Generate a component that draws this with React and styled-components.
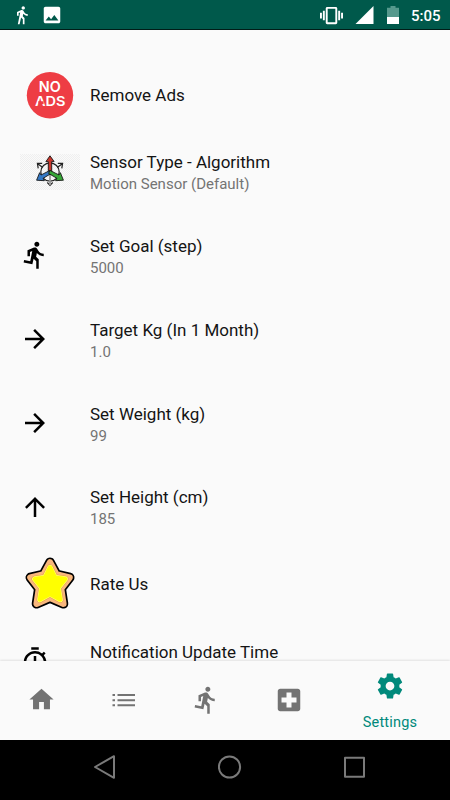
import React from "react";
import styled, { createGlobalStyle } from "styled-components";
import {
  MdDirectionsWalk,
  MdDirectionsRun,
  MdImage,
  MdVibration,
  MdArrowForward,
  MdArrowUpward,
  MdOutlineTimer,
  MdHome,
  MdLocalHospital,
} from "react-icons/md";

const GlobalStyle = createGlobalStyle`
  * { box-sizing: border-box; }
  body { margin: 0; background: #fafafa; }
`;

const Screen = styled.div`
  display: flex;
  flex-direction: column;
  width: 450px;
  height: 800px;
  overflow: hidden;
  background: #fafafa;
  font-family: Roboto, "Liberation Sans", sans-serif;
`;

const StatusBar = styled.header`
  display: flex;
  flex: none;
  align-items: center;
  justify-content: space-between;
  height: 30px;
  padding: 0 9px 0 12px;
  background: #00594b;
  border-bottom: 1px solid #001d18;
  color: #fff;
`;

const StatusGroup = styled.div`
  display: flex;
  align-items: center;
  gap: ${(p) => p.$gap}px;
  height: 29px;
  padding-top: 1px;
  svg { display: block; flex: none; }
`;

const Clock = styled.time`
  width: 30px;
  font-size: 15px;
  font-weight: 500;
  line-height: 28px;
  padding-top: 1px;
  white-space: nowrap;
`;

const SettingsList = styled.main`
  display: flex;
  flex: 1;
  flex-direction: column;
  min-height: 0;
  overflow: hidden;
  padding-top: 30px;
`;

const SettingRow = styled.div`
  display: flex;
  flex: none;
  align-items: center;
  height: ${(p) => (p.$tall ? 83.75 : 70.3)}px;
  padding-left: 20px;
`;

const IconSlot = styled.div`
  display: flex;
  align-items: center;
  width: 70px;
  padding-bottom: 1px;
  color: #000;
  svg { display: block; flex: none; }
`;

const RowText = styled.div`
  display: flex;
  flex-direction: column;
  min-height: ${(p) => (p.$tall ? 44.6 : 24)}px;
  padding-top: 1.6px;
`;

const RowTitle = styled.div`
  color: #141414;
  font-size: 17px;
  line-height: 23px;
  white-space: nowrap;
`;

const RowSummary = styled.div`
  color: #747474;
  font-size: 15px;
  line-height: 20px;
  white-space: nowrap;
`;

const TabBar = styled.nav`
  display: flex;
  flex: none;
  z-index: 1;
  height: 79px;
  background: #fafafa;
  box-shadow: 0 -1px 2px rgba(0, 0, 0, 0.1);
`;

const Tab = styled.div`
  display: flex;
  flex-direction: column;
  align-items: center;
  width: ${(p) => (p.$active ? 120 : 82.5)}px;
  padding-top: ${(p) => (p.$active ? 10 : 24)}px;
  color: ${(p) => (p.$active ? "#00897b" : "#737373")};
  svg { display: block; flex: none; }
`;

const TabLabel = styled.span`
  margin-top: 12px;
  font-size: 14.5px;
  line-height: 20px;
  letter-spacing: 0.2px;
`;

const SystemNav = styled.footer`
  display: flex;
  flex: none;
  align-items: center;
  justify-content: space-between;
  height: 60px;
  padding: 0 84px 6px 93px;
  background: #000;
`;

const BadgeText = styled.text`
  fill: #fff;
  font-family: Inter, Roboto, sans-serif;
  font-size: ${(p) => p.$size}px;
  font-weight: 600;
`;

const SignalIcon = () => (
  <svg width="20" height="18" viewBox="0 0 20 18">
    <path d="M18.5 0V18H0.5Z" fill="#fff" />
  </svg>
);

const BatteryIcon = () => (
  <svg width="12" height="18" viewBox="0 0 12 18">
    <path d="M3.5 0h5v1.8H12V11H0V1.8h3.5Z" fill="#56998d" />
    <path d="M0 11h12v7H0Z" fill="#fff" />
  </svg>
);

const NoAdsIcon = () => (
  <svg width="60" height="60" viewBox="0 0 60 60">
    <circle cx="30" cy="30.3" r="23.2" fill="#ee3d44" />
    <BadgeText $size={14.5} x="18.8" y="27.4" textLength="22" lengthAdjust="spacingAndGlyphs">NO</BadgeText>
    <BadgeText $size={13.2} x="15" y="41" textLength="30.5" lengthAdjust="spacingAndGlyphs">ADS</BadgeText>
    <path d="M18.2 37.7h5.4" stroke="#ee3d44" strokeWidth="2.8" />
  </svg>
);

const AxesIcon = () => (
  <svg width="60" height="36" viewBox="0 0 60 36">
    <defs>
      <pattern id="checks" width="2" height="2" patternUnits="userSpaceOnUse">
        <path d="M0 0h1v1H0zM1 1h1v1H1z" fill="#efefef" />
      </pattern>
    </defs>
    <path d="M0 0h60v36H0z" fill="#fafafa" />
    <path d="M0 0h60v36H0z" fill="url(#checks)" />
    <g fill="none" stroke="#222" strokeWidth="1.2">
      <circle cx="30" cy="18" r="9.2" />
      <path d="M27.3 28.5L30 31.3l2.7-2.8M22.5 13.2L18 10M18.2 14.4L17.4 9.4h4.8M37.5 13.2L42 10M37.8 9.4h4.8l-.8 5" />
    </g>
    <path d="M30 18v13" stroke="#999" strokeWidth="1.8" />
    <g stroke="#171717" strokeWidth="0.9" strokeLinejoin="round">
      <path d="M28.3 18V7.6h-2.4L30 1.8 34.1 7.6h-2.4V18Z" fill="#c8372d" />
      <path d="M30 16.4l-9 4.6-1.4-2.3L16.6 26.2l7.8.5-1.3-2.4 8.3-4.9Z" fill="#3478c4" />
      <path d="M30 16.4l9 4.6 1.4-2.3 3 7.5-7.8.5 1.3-2.4-8.3-4.9Z" fill="#36a637" />
    </g>
  </svg>
);

const OUTER_STAR = "M30 8.3L36.5 20.3 49.7 23.5 41.2 34.6 43.5 49.8 30 44 16.5 49.8 18.8 34.6 10.3 23.5 23.5 20.3Z";
const INNER_STAR = "M30 13.5L35 23.5 45.2 25 38.2 33.8 40.2 45.6 30 40 19.8 45.6 21.8 33.8 14.8 25 25 23.5Z";

const StarIcon = () => (
  <svg width="60" height="60" viewBox="0 0 60 60" strokeLinejoin="round">
    <path d={OUTER_STAR} fill="#000" stroke="#000" strokeWidth="9.6" />
    <path d={OUTER_STAR} fill="#f9b77d" stroke="#f9b77d" strokeWidth="6.2" />
    <path d={INNER_STAR} fill="#e99c40" stroke="#e99c40" strokeWidth="6.4" />
    <path d={INNER_STAR} fill="#ffff70" stroke="#ffff70" strokeWidth="5.4" />
    <path d={INNER_STAR} fill="#ff0" stroke="#ff0" strokeWidth="4" />
  </svg>
);

const ListIcon = () => (
  <svg width="30" height="30" viewBox="0 0 30 30" fill="currentColor">
    <path d="M3.5 9h2.5v2H3.5zM3.5 14.2h2.5v2H3.5zM3.5 19.3h2.5v2H3.5zM8.5 9H26v2H8.5zM8.5 14.2H26v2H8.5zM8.5 19.3H26v2H8.5z" />
  </svg>
);

const GearIcon = () => (
  <svg width="30" height="30" viewBox="0 0 24 24" fill="currentColor">
    <path d="M19.43 12.98c.04-.32.07-.64.07-.98s-.03-.66-.07-.98l2.11-1.65c.19-.15.24-.42.12-.64l-2-3.46c-.12-.22-.39-.3-.61-.22l-2.49 1c-.52-.4-1.08-.73-1.69-.98l-.38-2.65C14.46 2.18 14.25 2 14 2h-4c-.25 0-.46.18-.49.42l-.38 2.65c-.61.25-1.17.59-1.69.98l-2.49-1c-.23-.09-.49 0-.61.22l-2 3.46c-.13.22-.07.49.12.64l2.11 1.65c-.04.32-.07.65-.07.98s.03.66.07.98l-2.11 1.65c-.19.15-.24.42-.12.64l2 3.46c.12.22.39.3.61.22l2.49-1c.52.4 1.08.73 1.69.98l.38 2.65c.03.24.24.42.49.42h4c.25 0 .46-.18.49-.42l.38-2.65c.61-.25 1.17-.59 1.69-.98l2.49 1c.23.09.49 0 .61-.22l2-3.46c.12-.22.07-.49-.12-.64l-2.11-1.65zM12 15.5c-1.93 0-3.5-1.57-3.5-3.5s1.57-3.5 3.5-3.5 3.5 1.57 3.5 3.5-1.57 3.5-3.5 3.5z" />
  </svg>
);

const NavGlyph = ({ children }) => (
  <svg width="24" height="24" viewBox="0 0 24 24" fill="none" stroke="#7a7a7a" strokeWidth="2" strokeLinejoin="round">
    {children}
  </svg>
);

const settings = [
  { title: "Remove Ads", icon: <NoAdsIcon /> },
  { title: "Sensor Type - Algorithm", summary: "Motion Sensor (Default)", tall: true, icon: <AxesIcon /> },
  { title: "Set Goal (step)", summary: "5000", tall: true, icon: <MdDirectionsRun size={30} /> },
  { title: "Target Kg (In 1 Month)", summary: "1.0", tall: true, icon: <MdArrowForward size={30} /> },
  { title: "Set Weight (kg)", summary: "99", tall: true, icon: <MdArrowForward size={30} /> },
  { title: "Set Height (cm)", summary: "185", tall: true, icon: <MdArrowUpward size={30} /> },
  { title: "Rate Us", icon: <StarIcon /> },
  { title: "Notification Update Time", tall: true, icon: <MdOutlineTimer size={30} /> },
];

export default function App() {
  return (
    <Screen>
      <GlobalStyle />
      <StatusBar>
        <StatusGroup $gap={9}>
          <MdDirectionsWalk size={20} />
          <MdImage size={22} />
        </StatusGroup>
        <StatusGroup $gap={12}>
          <MdVibration size={23} />
          <SignalIcon />
          <BatteryIcon />
          <Clock>5:05</Clock>
        </StatusGroup>
      </StatusBar>
      <SettingsList>
        {settings.map((s) => (
          <SettingRow key={s.title} $tall={s.tall}>
            <IconSlot>{s.icon}</IconSlot>
            <RowText $tall={s.tall}>
              <RowTitle>{s.title}</RowTitle>
              {s.summary && <RowSummary>{s.summary}</RowSummary>}
            </RowText>
          </SettingRow>
        ))}
      </SettingsList>
      <TabBar>
        <Tab><MdHome size={29} /></Tab>
        <Tab><ListIcon /></Tab>
        <Tab><MdDirectionsRun size={30} /></Tab>
        <Tab><MdLocalHospital size={30} /></Tab>
        <Tab $active>
          <GearIcon />
          <TabLabel>Settings</TabLabel>
        </Tab>
      </TabBar>
      <SystemNav>
        <NavGlyph><path d="M2 12L21 1.2V22.8Z" /></NavGlyph>
        <NavGlyph><circle cx="11.5" cy="12" r="10.6" /></NavGlyph>
        <NavGlyph><path d="M3 2.8h19v19H3Z" /></NavGlyph>
      </SystemNav>
    </Screen>
  );
}
